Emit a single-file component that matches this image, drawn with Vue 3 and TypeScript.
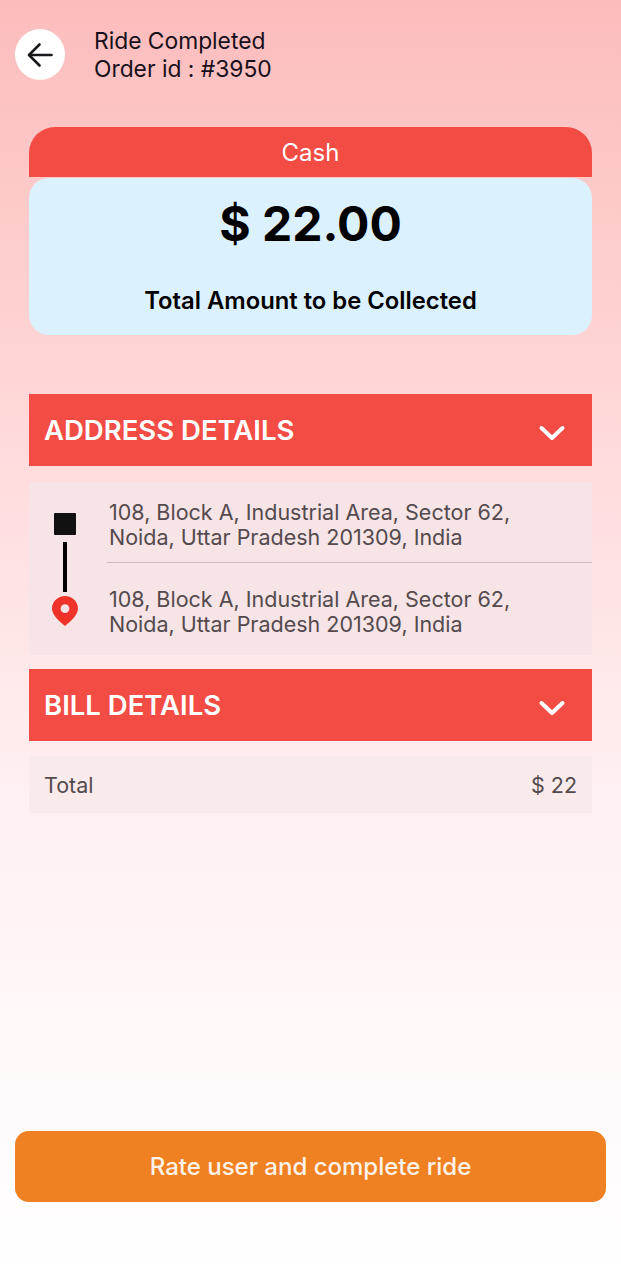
<template>
  <div class="page">
    <header class="top-bar">
      <button class="back-btn" aria-label="Back">
        <svg width="28" height="28" viewBox="0 0 28 28" fill="none" stroke="#17171c" stroke-width="2.6" stroke-linecap="round" stroke-linejoin="round">
          <path d="M25.5 14H3.5" />
          <path d="M13.5 3.5L3 14L13.5 24.5" />
        </svg>
      </button>
      <div class="top-title">
        <div>Ride Completed</div>
        <div>Order id : #{{ orderId }}</div>
      </div>
    </header>

    <section class="amount-card">
      <div class="pay-type">Cash</div>
      <div class="amount-body">
        <div class="amount">$ 22.00</div>
        <div class="amount-label">Total Amount to be Collected</div>
      </div>
    </section>

    <div class="section-head address-head">
      <span>ADDRESS DETAILS</span>
      <svg class="chevron" width="28" height="16" viewBox="0 0 28 16" fill="none" stroke="#fff" stroke-width="4" stroke-linecap="round" stroke-linejoin="round">
        <path d="M3.5 3L14 13L24.5 3" />
      </svg>
    </div>

    <div class="address-box">
      <div class="route">
        <div class="route-square"></div>
        <div class="route-line"></div>
        <svg width="26" height="30" viewBox="0 0 26 30">
          <path fill="#f0332a" fill-rule="evenodd" d="M13 0C5.8 0 0 5.6 0 12.6C0 19.6 8 26 13 30C18 26 26 19.6 26 12.6C26 5.6 20.2 0 13 0ZM13 8.2A4.4 4.4 0 1 1 13 17A4.4 4.4 0 1 1 13 8.2Z" />
        </svg>
      </div>
      <div class="address-list">
        <div class="address pickup">{{ addressLine1 }}<br />{{ addressLine2 }}</div>
        <div class="address drop">{{ addressLine1 }}<br />{{ addressLine2 }}</div>
      </div>
    </div>

    <div class="section-head bill-head">
      <span>BILL DETAILS</span>
      <svg class="chevron" width="28" height="16" viewBox="0 0 28 16" fill="none" stroke="#fff" stroke-width="4" stroke-linecap="round" stroke-linejoin="round">
        <path d="M3.5 3L14 13L24.5 3" />
      </svg>
    </div>

    <div class="total-row">
      <span>Total</span>
      <span>$ 22</span>
    </div>

    <button class="complete-btn">Rate user and complete ride</button>
  </div>
</template>

<script setup lang="ts">
const orderId = 3950
const addressLine1 = '108, Block A, Industrial Area, Sector 62,'
const addressLine2 = 'Noida, Uttar Pradesh 201309, India'
</script>

<style>
html,
body {
  margin: 0;
}
</style>

<style scoped>
.page {
  box-sizing: border-box;
  width: 621px;
  height: 1280px;
  overflow: hidden;
  display: flex;
  flex-direction: column;
  padding: 29px 15px 0;
  font-family: Inter, "Liberation Sans", sans-serif;
  background: linear-gradient(180deg, #fcbcbc 0%, #ffd9d9 33%, #fff0f1 62%, #fffbfc 88%, #ffffff 100%);
}

.top-bar {
  display: flex;
  align-items: center;
  gap: 29px;
  height: 51px;
}

.back-btn {
  width: 50px;
  height: 51px;
  padding: 0;
  border: none;
  border-radius: 50%;
  background: #fff;
  display: flex;
  align-items: center;
  justify-content: center;
}

.top-title {
  padding-top: 1px;
  font-size: 22.8px;
  line-height: 28px;
  color: #17101a;
}

.amount-card {
  margin: 47px 14px 0;
}

.pay-type {
  height: 50px;
  line-height: 52px;
  text-align: center;
  font-size: 24px;
  color: #fff;
  background: #f34c45;
  border-radius: 26px 26px 0 0;
}

.amount-body {
  margin-top: 1px;
  height: 157px;
  background: #dcf1fe;
  border-radius: 20px;
  text-align: center;
  color: #000;
  overflow: hidden;
}

.amount {
  margin-top: 17px;
  font-size: 48px;
  line-height: 58px;
  font-weight: 700;
}

.amount-label {
  margin-top: 34px;
  font-size: 23.8px;
  line-height: 28px;
  font-weight: 600;
}

.section-head {
  margin: 0 14px;
  height: 72px;
  flex: none;
  display: flex;
  align-items: center;
  justify-content: space-between;
  padding: 0 26px 0 15px;
  background: #f34c45;
  color: #fff;
  font-size: 27.5px;
  font-weight: 600;
}

.chevron {
  margin-top: 5px;
}

.address-head {
  margin-top: 59px;
}

.address-box {
  margin: 16px 14px 0;
  height: 173px;
  display: flex;
  background: #f7e4e6;
}

.route {
  width: 72px;
  flex: none;
  padding-top: 31px;
  box-sizing: border-box;
  display: flex;
  flex-direction: column;
  align-items: center;
}

.route-square {
  width: 22px;
  height: 22px;
  background: #111;
  border-radius: 1px;
}

.route-line {
  width: 4px;
  height: 50px;
  margin: 7px 0 4px;
  background: #000;
}

.address-list {
  flex: 1;
  margin-left: 6px;
}

.address {
  box-sizing: border-box;
  padding-left: 2px;
  font-size: 21.5px;
  line-height: 25px;
  color: #544a4d;
  white-space: nowrap;
}

.pickup {
  height: 81px;
  padding-top: 18px;
  border-bottom: 1px solid #c9bcbe;
}

.drop {
  padding-top: 24px;
}

.bill-head {
  margin-top: 14px;
}

.total-row {
  margin: 15px 14px 0;
  height: 57px;
  display: flex;
  align-items: center;
  justify-content: space-between;
  padding: 0 15px;
  background: #f9eaeb;
  font-size: 21.5px;
  color: #544a4d;
}

.complete-btn {
  margin-top: 318px;
  height: 71px;
  flex: none;
  border: none;
  border-radius: 14px;
  background: #f08122;
  color: #fdf3e8;
  font-family: inherit;
  font-size: 24px;
  font-weight: 500;
}
</style>
